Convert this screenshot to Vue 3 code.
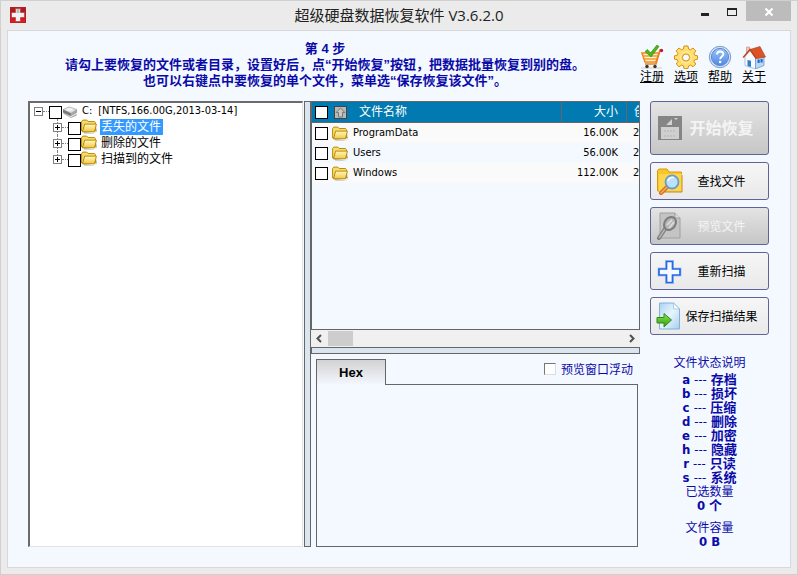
<script setup>
import { ref } from 'vue'

const selected = ref('丢失的文件')
const nodes = ['丢失的文件', '删除的文件', '扫描到的文件']
const files = [
  { name: 'ProgramData', size: '16.00K', created: '2' },
  { name: 'Users', size: '56.00K', created: '2' },
  { name: 'Windows', size: '112.00K', created: '2' },
]
const links = [
  { id: 'cart', label: '注册' },
  { id: 'gear', label: '选项' },
  { id: 'help', label: '帮助' },
  { id: 'home', label: '关于' },
]
const states = [
  ['a', '存档'],
  ['b', '损坏'],
  ['c', '压缩'],
  ['d', '删除'],
  ['e', '加密'],
  ['h', '隐藏'],
  ['r', '只读'],
  ['s', '系统'],
]
</script>

<template>
  <div class="window">
    <svg class="defs" width="0" height="0" aria-hidden="true">
      <defs>
        <linearGradient id="gFolder" x1="0" y1="0" x2="0" y2="1">
          <stop offset="0" stop-color="#fff9c0" /><stop offset="1" stop-color="#f3c740" />
        </linearGradient>
        <linearGradient id="gBlue" x1="0" y1="0" x2="0" y2="1">
          <stop offset="0" stop-color="#9cc3f7" /><stop offset="1" stop-color="#4f88e4" />
        </linearGradient>
        <linearGradient id="gPaper" x1="0" y1="0" x2="1" y2="1">
          <stop offset="0" stop-color="#a9d3f3" /><stop offset="0.5" stop-color="#e8f5fd" /><stop offset="1" stop-color="#a6cfee" />
        </linearGradient>
        <linearGradient id="gGreen" x1="0" y1="0" x2="0" y2="1">
          <stop offset="0" stop-color="#8fe84f" /><stop offset="1" stop-color="#2f9a12" />
        </linearGradient>
        <linearGradient id="gRed" x1="0" y1="0" x2="0" y2="1">
          <stop offset="0" stop-color="#a02226" /><stop offset="0.5" stop-color="#c80f14" /><stop offset="1" stop-color="#f01c1c" />
        </linearGradient>
        <symbol id="folder" viewBox="0 0 16 14">
          <path d="M2 12.500 3.500 14H14.500L16 7v4l-1.500 3z" fill="#777" opacity=".6" />
          <path d="M.6 11.500V2L1.800.6h4L7.200 2h6.300l.9 1v8.500z" fill="#f7dc6c" stroke="#b88a10" />
          <path d="M1.500 12.300 3.600 4.600h11.800L13.500 12.300z" fill="url(#gFolder)" stroke="#b88a10" />
        </symbol>
      </defs>
    </svg>

    <header class="titlebar">
      <svg class="app-icon" viewBox="0 0 16 16">
        <rect x=".5" y=".5" width="15" height="15" fill="url(#gRed)" stroke="#b32025" />
        <path d="M5.500 1.500h5v4h4v5h-4v4h-5v-4h-4v-5h4z" fill="#f2f2f2" stroke="#a33" stroke-width=".6" />
        <path d="M6.500 2h3v4h-3z" fill="#bcbcbc" />
      </svg>
      <h1>超级硬盘数据恢复软件 V3.6.2.0</h1>
      <div class="controls">
        <button type="button" aria-label="最小化" class="ctl"><svg viewBox="0 0 28 20"><path d="M11 12h8v3h-8z" fill="#222" /></svg></button>
        <button type="button" aria-label="最大化" class="ctl"><svg viewBox="0 0 28 20"><path d="M9 7h10v8H9zM10 9v5h8V9z" fill="#222" fill-rule="evenodd" /></svg></button>
        <button type="button" aria-label="关闭" class="ctl close"><svg viewBox="0 0 45 20"><path d="M19.500 7.500l7 7m0-7l-7 7" stroke="#fff" stroke-width="2" /></svg></button>
      </div>
    </header>

    <main class="client">
      <div class="head">
        <div class="guide">
          <p>第 4 步</p>
          <p>请勾上要恢复的文件或者目录，设置好后，点“开始恢复”按钮，把数据批量恢复到别的盘。</p>
          <p>也可以右键点中要恢复的单个文件，菜单选“保存恢复该文件”。</p>
        </div>
        <nav class="links">
          <a v-for="l in links" :key="l.id" href="#">
            <svg v-if="l.id === 'cart'" viewBox="0 0 24 24">
              <path d="M1 23h21" stroke="#ccc" />
              <path d="M2 8h17l-3 9H5z" fill="#fff0d0" stroke="#ee8a1d" stroke-width="1.600" />
              <path d="M3 11h15M4 14h13" stroke="#f29a32" stroke-width="1.400" />
              <path d="M22 5h-2l-4 14H5" fill="none" stroke="#e9821a" stroke-width="1.600" />
              <circle cx="7" cy="21.500" r="1.700" fill="#333" /><circle cx="15" cy="21.500" r="1.700" fill="#333" />
              <circle cx="21.500" cy="5.500" r="1.700" fill="#c21a2a" />
              <path d="M5 6.500l2.500-2 3 3.500L17 0l2 1.500L11 12z" fill="#48b81c" stroke="#2c8a0e" stroke-width=".6" />
            </svg>
            <svg v-else-if="l.id === 'gear'" viewBox="0 0 24 24">
              <g fill="#ffdf70" stroke="#d98e10">
                <path d="M10 1h4l.6 3 1.900.8L19 3l2.800 2.800L20 8.500l.7 1.700 2.800.6v3.400l-2.800.6-.7 1.700 1.800 2.500-2.800 2.800-2.500-1.700-1.900.8-.6 2.700h-4l-.6-2.700-1.900-.8L5 21.800 2.200 19 4 16.500l-.7-1.700-2.800-.6v-3.400l2.800-.6L4 8.500 2.200 5.800 5 3l2.500 1.800L9.400 4z" />
                <circle cx="12" cy="12.500" r="3.600" fill="#f8faff" />
              </g>
              <circle cx="12" cy="12.500" r="5.500" fill="none" stroke="#fff0a6" />
            </svg>
            <svg v-else-if="l.id === 'help'" viewBox="0 0 24 24">
              <circle cx="12" cy="12" r="10.700" fill="#d4e2f8" stroke="#7d9cc8" />
              <circle cx="12" cy="12" r="8.600" fill="url(#gBlue)" stroke="#5c8ad6" />
              <path d="M9 9.500c0-4 6.300-4 6.300-.3 0 2.300-3.100 2.400-3.100 5" fill="none" stroke="#fff" stroke-width="2" />
              <circle cx="12.100" cy="17" r="1.300" fill="#fff" />
            </svg>
            <svg v-else viewBox="0 0 24 24">
              <path d="M4.500 2h3v6h-3z" fill="#e9c9bb" stroke="#b87a66" stroke-width=".5" />
              <path d="M3 11.500l5-6 5.500 7V24L3 20.500z" fill="#fafcff" stroke="#8faecb" stroke-width=".7" />
              <path d="M13.500 12h8.500v8.500L13.500 24z" fill="#b9d8f3" stroke="#5a93c6" stroke-width=".7" />
              <path d="M5.500 15l3.500.8V22l-3.500-1z" fill="#2f7cd0" />
              <path d="M15.500 14.500h2.200v3.500h-2.200zM18.500 14h2.200v3.500h-2.200z" fill="#2b6fc4" />
              <path d="M8 4.500L18 1.500l5.500 10.500L14.500 13.500z" fill="#dc5426" stroke="#a93a17" stroke-width=".6" />
              <path d="M1.200 12.500L8 4.500l6.200 9" fill="none" stroke="#c3431b" stroke-width="1.500" />
            </svg>
            <span>{{ l.label }}</span>
          </a>
        </nav>
      </div>

      <div class="body">
        <section class="tree">
          <div class="node root">
            <button type="button" class="expander" aria-label="折叠"><i></i><b class="box"></b><i></i></button>
            <span class="dots"></span>
            <input type="checkbox" class="check" aria-label="C:" />
            <svg class="ico" viewBox="0 0 16 16">
              <path d="M1 10l8 5 6-3.500v2L9 16l-8-4.500z" fill="#777" opacity=".6" />
              <path d="M.5 7L7 4l8.500 3L9 11z" fill="#dedede" stroke="#999" stroke-width=".6" />
              <path d="M.5 7v3L9 14v-3z" fill="#777" /><path d="M15.500 7v3.500L9 14v-3z" fill="#a5a5a5" />
              <ellipse cx="7.500" cy="7" rx="3.500" ry="1.400" fill="#f5f5f5" />
            </svg>
            <span class="drive"><span>C:</span><span>[NTFS,166.00G,2013-03-14]</span></span>
          </div>
          <div v-for="n in nodes" :key="n" class="node child">
            <button type="button" class="expander" :aria-label="n"><i></i><b class="box plus"></b><i></i></button>
            <span class="dots"></span>
            <input type="checkbox" class="check" :aria-label="n" />
            <svg class="ico"><use href="#folder" /></svg>
            <span class="name" :class="{ on: n === selected }" @click="selected = n">{{ n }}</span>
          </div>
        </section>

        <div class="split"></div>

        <section class="work">
          <div class="list">
            <table>
              <colgroup><col /><col class="c-size" /><col class="c-date" /></colgroup>
              <thead>
                <tr>
                  <th>
                    <div class="cell">
                      <input type="checkbox" class="check" aria-label="全选" />
                      <button type="button" class="up" aria-label="上级目录">
                        <svg viewBox="0 0 11 11"><path d="M5.500 1L9.800 5.500H7.500v4.500h-4V5.500H1.200z" fill="#c8c8c8" stroke="#777" /></svg>
                      </button>
                      <span>文件名称</span>
                    </div>
                  </th>
                  <th class="size">大小</th>
                  <th class="date">创</th>
                </tr>
              </thead>
              <tbody>
                <tr v-for="f in files" :key="f.name">
                  <td>
                    <div class="cell">
                      <input type="checkbox" class="check" :aria-label="f.name" />
                      <svg class="ico"><use href="#folder" /></svg>
                      <span>{{ f.name }}</span>
                    </div>
                  </td>
                  <td class="size">{{ f.size }}</td>
                  <td class="date">{{ f.created }}</td>
                </tr>
              </tbody>
            </table>
          </div>
          <div class="scroll">
            <button type="button" aria-label="向左"><svg viewBox="0 0 17 17"><path d="M10 5L6.500 8.500L10 12" /></svg></button>
            <span class="thumb"></span>
            <button type="button" class="right" aria-label="向右"><svg viewBox="0 0 17 17"><path d="M7 5l3.500 3.500L7 12" /></svg></button>
          </div>
          <div class="hsplit"></div>
          <div class="preview">
            <div class="tabs">
              <button type="button" class="tab">Hex</button>
              <label class="float"><input type="checkbox" /><span>预览窗口浮动</span></label>
            </div>
            <div class="pane"></div>
          </div>
        </section>

        <aside class="side">
          <button type="button" class="btn big" disabled>
            <svg viewBox="0 0 28 28">
              <path d="M2 2h24v24H2z" fill="#858585" />
              <path d="M10 11l6-6v6zM18 4h4l-2 2z" fill="#d2d2d2" />
              <path d="M5 13h18v12H5z" fill="#cfcfcf" />
              <path d="M8 17h12M8 22h12" stroke="#b5b5b5" stroke-dasharray="2 1" />
            </svg>
            <span>开始恢复</span>
          </button>
          <button type="button" class="btn">
            <svg viewBox="0 0 28 28">
              <path d="M1.500 24V3.500L3 2h8l2 3h12.500v19z" fill="#f7c62b" stroke="#d99a10" />
              <path d="M3 7h23v17H3z" fill="#fbd64e" />
              <path d="M26 8v17H6" fill="none" stroke="#c98a0c" />
              <path d="M11 20l-6 6" stroke="#d56e1c" stroke-width="4" stroke-linecap="round" />
              <path d="M11 20l-6 6" stroke="#f5b26b" stroke-width="1.500" stroke-linecap="round" />
              <circle cx="16" cy="15" r="6.500" fill="#b9e3fb" stroke="#6b9cc9" stroke-width="1.800" />
              <path d="M12 14a4.500 4.500 0 0 1 6-3.500" fill="none" stroke="#fff" stroke-width="1.500" />
            </svg>
            <span>查找文件</span>
          </button>
          <button type="button" class="btn" disabled>
            <svg viewBox="0 0 28 28">
              <path d="M4 1h15l5 5v20H4z" fill="#c4c4c4" stroke="#a0a0a0" />
              <path d="M19 1v5h5" fill="#ddd" stroke="#a0a0a0" />
              <path d="M9 17l-6 9" stroke="#7d7d7d" stroke-width="4" stroke-linecap="round" />
              <path d="M9 17l-6 9" stroke="#b5b5b5" stroke-width="1.500" />
              <ellipse cx="14" cy="11.500" rx="5.500" ry="7" transform="rotate(35 14 11.500)" fill="#b5b5b5" stroke="#7d7d7d" stroke-width="2" />
              <path d="M11 13l5-5m-3 8l5-6" stroke="#e0e0e0" stroke-width="1.500" />
            </svg>
            <span>预览文件</span>
          </button>
          <button type="button" class="btn">
            <svg viewBox="0 0 28 28">
              <path d="M10.500 4.500h6V12H24v6h-7.500v7.500h-6V18H3v-6h7.500z" fill="#fff" stroke="#a8c9fa" stroke-width="3" />
              <path d="M10.500 4.500h6V12H24v6h-7.500v7.500h-6V18H3v-6h7.500z" fill="#f5faff" stroke="#2a67e0" stroke-width="1.700" />
            </svg>
            <span>重新扫描</span>
          </button>
          <button type="button" class="btn">
            <svg viewBox="0 0 28 28">
              <path d="M3.500 1h14l6 6v20h-20z" fill="url(#gPaper)" stroke="#7fb2dc" />
              <path d="M17.500 1v6h6z" fill="#f4fbff" stroke="#8fbfe4" stroke-width=".7" />
              <path d="M1 15.500h7v-4l7.500 6.500L8 25v-4H1z" fill="url(#gGreen)" stroke="#2e8c14" />
            </svg>
            <span>保存扫描结果</span>
          </button>

          <div class="legend">
            <p class="title">文件状态说明</p>
            <p v-for="[k, v] in states" :key="k" class="strong">{{ k }} <span class="dash">---</span> {{ v }}</p>
            <p>已选数量</p>
            <p class="strong gap">0 个</p>
            <p>文件容量</p>
            <p class="strong">0 B</p>
          </div>
        </aside>
      </div>
    </main>
  </div>
</template>

<style>
body {
  background: #ebebeb;
}
</style>

<style scoped>
* {
  box-sizing: border-box;
}
.window {
  display: flex;
  flex-direction: column;
  min-height: 100vh;
  padding: 0 6px 6px;
  background: #ebebeb;
  border: 1px solid #d0d0d0;
  font: 12px/16px "DejaVu Sans Condensed", "Noto Sans", "Noto Sans CJK SC", sans-serif;
  color: #000;
}
.defs {
  position: absolute;
}
button {
  font: inherit;
  color: inherit;
  padding: 0;
  border: 0;
  background: none;
}
svg {
  display: block;
}
p {
  margin: 0;
}
.titlebar {
  display: flex;
  align-items: flex-start;
  height: 29px;
}
.app-icon {
  flex: none;
  width: 16px;
  height: 16px;
  margin: 6px 0 0 3px;
}
h1 {
  flex: 1;
  margin: 0;
  padding-left: 82px;
  font: 15px/28px "Open Sans", "Noto Sans CJK SC", sans-serif;
  text-align: center;
  color: #222;
}
.controls {
  display: flex;
}
.ctl {
  width: 28px;
  height: 20px;
}
.ctl.close {
  width: 45px;
  background: #bcbcbc;
}
.client {
  flex: 1;
  display: flex;
  flex-direction: column;
  padding: 0 21px 20px 0;
  background: #f4f8ff;
  border: 1px solid #d5d8dd;
}
.head {
  display: flex;
  justify-content: space-between;
  height: 70px;
}
.guide {
  flex: 1;
  padding: 10px 0 0 2px;
  font: bold 13px/16px "Liberation Sans", "Noto Sans CJK SC", sans-serif;
  text-align: center;
  white-space: nowrap;
  color: #0a0aa8;
}
.links {
  display: flex;
  gap: 10px;
  padding: 14px 3px 0 0;
}
.links a {
  width: 24px;
  color: #000;
  white-space: nowrap;
}
.links svg {
  width: 24px;
  height: 24px;
}
.body {
  flex: 1;
  display: grid;
  grid-template-columns: minmax(0, 276fr) 7px minmax(0, 329fr) 129px;
  padding-left: 20px;
}
.tree {
  margin-right: 1px;
  padding: 0 0 0 4px;
  background: #fff;
  border: 1px solid #e3e3e3;
  border-top: 2px solid #6b6b6b;
  border-left: 2px solid #6b6b6b;
}
.node {
  display: flex;
  height: 16px;
  white-space: nowrap;
}
.child {
  padding-left: 19px;
}
.expander {
  display: flex;
  flex-direction: column;
  align-items: center;
  width: 9px;
  height: 16px;
}
.expander i {
  flex: 1;
  width: 1px;
  border-left: 1px dotted #808080;
}
.root i,
.child:last-child i:last-child {
  border-color: transparent;
}
.box {
  width: 9px;
  height: 9px;
  border: 1px solid #808080;
  background: linear-gradient(#000, #000) center / 5px 1px no-repeat;
}
.plus {
  background: linear-gradient(#000, #000) center / 5px 1px no-repeat,
    linear-gradient(#000, #000) center / 1px 5px no-repeat;
}
.dots {
  width: 6px;
  height: 1px;
  margin-top: 8px;
  border-top: 1px dotted #808080;
}
.check {
  appearance: none;
  flex: none;
  align-self: flex-end;
  width: 13px;
  height: 13px;
  margin: 0;
  background: #fff;
  border: 1px solid #000;
}
.ico {
  flex: none;
  width: 16px;
  height: 15px;
}
.drive {
  display: flex;
  gap: 6px;
  padding-left: 4px;
  font-size: 11px;
}
.name {
  margin-left: 3px;
  padding: 0 2px 0 1px;
}
.name.on {
  background: #3399ff;
  color: #fff;
}
.split,
.hsplit {
  background: #dbe5f0;
  border: 1px solid #666;
}
.work {
  display: flex;
  flex-direction: column;
  min-width: 0;
}
.list {
  flex: none;
  height: 229px;
  overflow: hidden;
  border: 1px solid #666;
}
table {
  width: 100%;
  table-layout: fixed;
  border-collapse: separate;
  border-spacing: 0;
  font-size: 11px;
}
.c-size {
  width: 65px;
}
.c-date {
  width: 13px;
}
th,
td {
  height: 20px;
  padding: 0;
  overflow: hidden;
  font-weight: normal;
  text-align: left;
  white-space: nowrap;
}
th {
  height: 21px;
  background: #007ab0;
  border-bottom: 1px solid #666;
  font-size: 12px;
  color: #fff;
}
th + th {
  border-left: 1px solid #666;
}
tbody tr {
  background: #fafafa;
}
tbody tr:nth-child(even) {
  background: #f4f8ff;
}
.cell {
  display: flex;
  align-items: center;
  padding-left: 3px;
}
.cell .check {
  align-self: center;
}
.cell .ico {
  margin: 0 5px 0 4px;
}
.up {
  width: 13px;
  height: 13px;
  margin: 0 12px 0 6px;
  background: #b8b8b8;
  border: 1px solid #444;
}
th.size,
td.size {
  padding-right: 8px;
  text-align: right;
}
th.date,
td.date {
  padding-left: 7px;
  text-overflow: clip;
}
.scroll {
  display: flex;
  align-items: center;
  height: 17px;
  background: #f0f0f0;
}
.scroll button {
  width: 17px;
  height: 17px;
}
.scroll path {
  fill: none;
  stroke: #505050;
  stroke-width: 2;
}
.scroll .right {
  margin-left: auto;
}
.thumb {
  width: 25px;
  height: 15px;
  background: #cdcdcd;
}
.hsplit {
  height: 7px;
}
.preview {
  flex: 1;
  display: flex;
  flex-direction: column;
  padding: 5px 2px 0 5px;
}
.tabs {
  display: flex;
  justify-content: space-between;
  height: 25px;
}
.tab {
  position: relative;
  width: 70px;
  height: 26px;
  background: linear-gradient(#d2d2d2, #f4f8ff);
  border: 1px solid #666;
  border-bottom: 0;
  font: bold 13px/24px "Liberation Sans", sans-serif;
}
.float {
  display: flex;
  gap: 5px;
  padding: 4px 5px 0 0;
  line-height: 14px;
  color: #0a0aa8;
}
.float input {
  appearance: none;
  width: 12px;
  height: 12px;
  margin: 0;
  background: #fff;
  border: 1px solid #ddd;
  border-top: 1px solid #777;
  border-left: 1px solid #777;
}
.pane {
  flex: 1;
  border: 1px solid #666;
}
.side {
  display: flex;
  flex-direction: column;
  gap: 7px;
  margin: 0 0 -8px 10px;
}
.btn {
  display: flex;
  align-items: center;
  height: 38px;
  padding: 0 9px 0 5px;
  background: linear-gradient(#f6f6f6, #e9e9e9);
  border: 1px solid #62629a;
  border-radius: 3px;
}
.btn svg {
  flex: none;
  width: 28px;
  height: 28px;
}
.btn span {
  flex: 1;
  padding-top: 2px;
  text-align: center;
  white-space: nowrap;
}
.btn:disabled {
  background: linear-gradient(#e4e4e4, #c6c6c6);
  color: #f4f4f4;
}
.btn.big {
  height: 54px;
  font-size: 16px;
  font-weight: bold;
}
.legend {
  padding-top: 14px;
  text-align: center;
  line-height: 14px;
  color: #0a0aa8;
}
.title {
  margin-bottom: 3px;
}
.strong {
  font-size: 13px;
  font-weight: bold;
}
.dash {
  font-weight: normal;
}
.gap {
  margin-bottom: 8px;
}
</style>
